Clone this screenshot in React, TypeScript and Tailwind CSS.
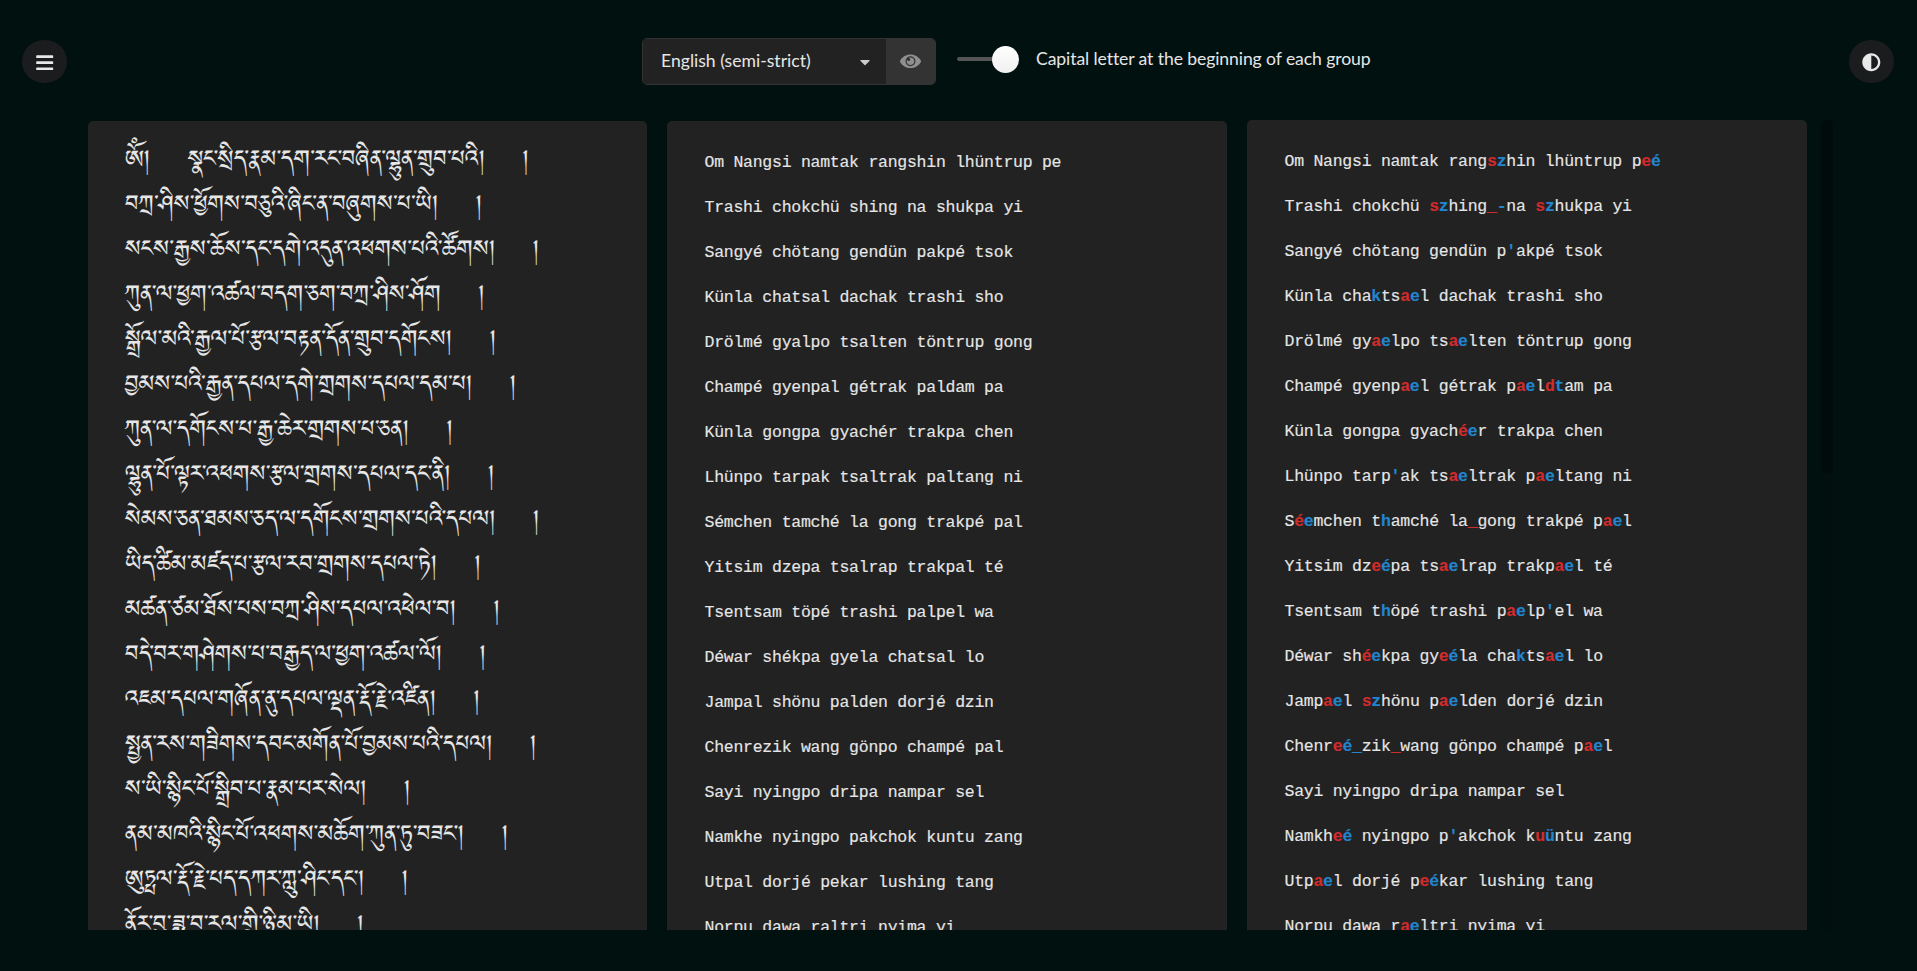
import type { ReactNode } from "react";
import { FaAdjust, FaBars, FaCaretDown } from "react-icons/fa";

const TIBETAN = [
  "ཨོཾ།    སྣང་སྲིད་རྣམ་དག་རང་བཞིན་ལྷུན་གྲུབ་པའི།    །",
  "བཀྲ་ཤིས་ཕྱོགས་བཅུའི་ཞིང་ན་བཞུགས་པ་ཡི།    །",
  "སངས་རྒྱས་ཆོས་དང་དགེ་འདུན་འཕགས་པའི་ཚོགས།    །",
  "ཀུན་ལ་ཕྱག་འཚལ་བདག་ཅག་བཀྲ་ཤིས་ཤོག    །",
  "སྒྲོལ་མའི་རྒྱལ་པོ་རྩལ་བརྟན་དོན་གྲུབ་དགོངས།    །",
  "བྱམས་པའི་རྒྱན་དཔལ་དགེ་གྲགས་དཔལ་དམ་པ།    །",
  "ཀུན་ལ་དགོངས་པ་རྒྱ་ཆེར་གྲགས་པ་ཅན།    །",
  "ལྷུན་པོ་ལྟར་འཕགས་རྩལ་གྲགས་དཔལ་དང་ནི།    །",
  "སེམས་ཅན་ཐམས་ཅད་ལ་དགོངས་གྲགས་པའི་དཔལ།    །",
  "ཡིད་ཚིམ་མཛད་པ་རྩལ་རབ་གྲགས་དཔལ་ཏེ།    །",
  "མཚན་ཙམ་ཐོས་པས་བཀྲ་ཤིས་དཔལ་འཕེལ་བ།    །",
  "བདེ་བར་གཤེགས་པ་བརྒྱད་ལ་ཕྱག་འཚལ་ལོ།    །",
  "འཇམ་དཔལ་གཞོན་ནུ་དཔལ་ལྡན་རྡོ་རྗེ་འཛིན།    །",
  "སྤྱན་རས་གཟིགས་དབང་མགོན་པོ་བྱམས་པའི་དཔལ།    །",
  "ས་ཡི་སྙིང་པོ་སྒྲིབ་པ་རྣམ་པར་སེལ།    །",
  "ནམ་མཁའི་སྙིང་པོ་འཕགས་མཆོག་ཀུན་ཏུ་བཟང་།    །",
  "ཨུཏྤལ་རྡོ་རྗེ་པད་དཀར་ཀླུ་ཤིང་དང་།    །",
  "ནོར་བུ་ཟླ་བ་རལ་གྲི་ཉི་མ་ཡི།    །",
];

// {removed|added} marks a difference between two transliterations.
const DIFF = [
  "Om Nangsi namtak rang{s|z}hin lhüntrup p{e|é}",
  "Trashi chokchü {s|z}hing{_|-}na {s|z}hukpa yi",
  "Sangyé chötang gendün p{|'}akpé tsok",
  "Künla cha{|k}ts{a|e}l dachak trashi sho",
  "Drölmé gy{a|e}lpo ts{a|e}lten töntrup gong",
  "Champé gyenp{a|e}l gétrak p{a|e}l{d|t}am pa",
  "Künla gongpa gyach{é|e}r trakpa chen",
  "Lhünpo tarp{|'}ak ts{a|e}ltrak p{a|e}ltang ni",
  "S{é|e}mchen t{|h}amché la{_|}gong trakpé p{a|e}l",
  "Yitsim dz{e|é}pa ts{a|e}lrap trakp{a|e}l té",
  "Tsentsam t{|h}öpé trashi p{a|e}lp{|'}el wa",
  "Déwar sh{é|e}kpa gy{e|é}la cha{|k}ts{a|e}l lo",
  "Jamp{a|e}l {s|z}hönu p{a|e}lden dorjé dzin",
  "Chenr{e|é}{|_}zik{_|}wang gönpo champé p{a|e}l",
  "Sayi nyingpo dripa nampar sel",
  "Namkh{e|é} nyingpo p{|'}akchok k{u|ü}ntu zang",
  "Utp{a|e}l dorjé p{e|é}kar lushing tang",
  "Norpu dawa r{a|e}ltri nyima yi",
];

const PLAIN = [
  "Om Nangsi namtak rangshin lhüntrup pe",
  "Trashi chokchü shing na shukpa yi",
  "Sangyé chötang gendün pakpé tsok",
  "Künla chatsal dachak trashi sho",
  "Drölmé gyalpo tsalten töntrup gong",
  "Champé gyenpal gétrak paldam pa",
  "Künla gongpa gyachér trakpa chen",
  "Lhünpo tarpak tsaltrak paltang ni",
  "Sémchen tamché la gong trakpé pal",
  "Yitsim dzepa tsalrap trakpal té",
  "Tsentsam töpé trashi palpel wa",
  "Déwar shékpa gyela chatsal lo",
  "Jampal shönu palden dorjé dzin",
  "Chenrezik wang gönpo champé pal",
  "Sayi nyingpo dripa nampar sel",
  "Namkhe nyingpo pakchok kuntu zang",
  "Utpal dorjé pekar lushing tang",
  "Norpu dawa raltri nyima yi",
];

const MONO =
  "whitespace-pre pl-[37.5px] font-['Liberation_Mono',monospace] text-[16.5px] leading-[45px] tracking-[-0.26px] [-webkit-text-stroke:0.15px]";

function DiffLine({ text }: { text: string }) {
  const parts = text.split(/(\{[^}]*\})/);
  return (
    <p>
      {parts.map((part, i) => {
        if (!part.startsWith("{")) return part;
        const [removed, added] = part.slice(1, -1).split("|");
        return (
          <b key={i}>
            <span className="text-[#d12c2c]">{removed}</span>
            <span className="text-[#2185d0]">{added}</span>
          </b>
        );
      })}
    </p>
  );
}

function EyeIcon() {
  return (
    <svg viewBox="0 0 576 512" className="w-[21px]" fill="currentColor">
      <path d="M569.354 231.631C512.969 135.949 407.81 72 288 72 168.14 72 63.004 135.994 6.646 231.631a47.999 47.999 0 0 0 0 48.739C63.031 376.051 168.19 440 288 440c119.86 0 224.996-63.994 281.354-159.631a47.997 47.997 0 0 0 0-48.738zM288 392c-75.162 0-136-60.827-136-136 0-75.162 60.826-136 136-136 75.162 0 136 60.826 136 136 0 75.162-60.826 136-136 136zm104-136c0 57.438-46.562 104-104 104s-104-46.562-104-104c0-17.708 4.431-34.379 12.236-48.973l-.001.032c0 23.651 19.173 42.823 42.824 42.823s42.824-19.173 42.824-42.823c0-23.651-19.173-42.824-42.824-42.824l-.032.001C253.621 156.431 270.292 152 288 152c57.438 0 104 46.562 104 104z" />
    </svg>
  );
}

function RoundButton({ children }: { children: ReactNode }) {
  return (
    <button className="mt-10 flex h-[43px] w-[45px] items-center justify-center rounded-full bg-[#1b1c1d] text-[#e8e8e8]">
      {children}
    </button>
  );
}

export default function App() {
  return (
    <div className="flex h-[971px] w-[1917px] flex-col overflow-hidden bg-[#011110] font-['Lato',sans-serif] text-[#e6e6e6]">
      <header className="flex h-[120px] shrink-0 items-start pr-[23px] pl-[22px]">
        <RoundButton>
          <FaBars className="mt-0.5 size-[19.4px]" />
        </RoundButton>
        <div className="mr-auto ml-[575px] flex pt-[38px] text-[17.6px]">
          <div className="flex h-[47px] w-[294px] overflow-hidden rounded-[5px] border border-[#333]">
            <div className="flex flex-1 items-center justify-between bg-[#222] pr-[13px] pl-[18px]">
              <span>English (semi-strict)</span>
              <FaCaretDown className="mt-px size-4 text-[#ccc]" />
            </div>
            <div className="flex w-[49px] items-center justify-center bg-[#333] text-[#8f8f8f]">
              <EyeIcon />
            </div>
          </div>
          <div className="ml-[21px] flex h-[42px] items-center">
            <div className="h-1 w-[35px] rounded-l-full bg-[#555]" />
            <div className="size-[27px] rounded-full bg-linear-to-b from-white to-[#f0f0f0]" />
            <span className="ml-[17px] tracking-[-0.1px]">Capital letter at the beginning of each group</span>
          </div>
        </div>
        <RoundButton>
          <FaAdjust className="mt-0.5 size-[18.6px]" />
        </RoundButton>
      </header>
      <main className="flex h-[810px] gap-5 overflow-hidden pl-[88px]">
        <section className="mt-px w-[559px] rounded-t-[5px] bg-[#222] pt-[17px] pl-[37px] font-['Jomolhari','Noto_Serif_Tibetan',serif] text-[29px] leading-[45px] whitespace-pre [word-spacing:0.8px]">
          {TIBETAN.map((line) => (
            <p key={line} className="h-[45px]">{line}</p>
          ))}
        </section>
        <section className={`${MONO} mt-px w-[560px] rounded-t-[5px] bg-[#222] pt-[19px]`}>
          {PLAIN.map((line) => (
            <p key={line}>{line}</p>
          ))}
        </section>
        <section className={`${MONO} w-[560px] rounded-t-[5px] bg-[#222] pt-[19px]`}>
          {DIFF.map((line) => (
            <DiffLine key={line} text={line} />
          ))}
        </section>
        <div className="-ml-1.5 w-3 rounded-t-full bg-[#010f0e]">
          <div className="h-[353px] rounded-full bg-[#000b0a]" />
        </div>
      </main>
    </div>
  );
}
